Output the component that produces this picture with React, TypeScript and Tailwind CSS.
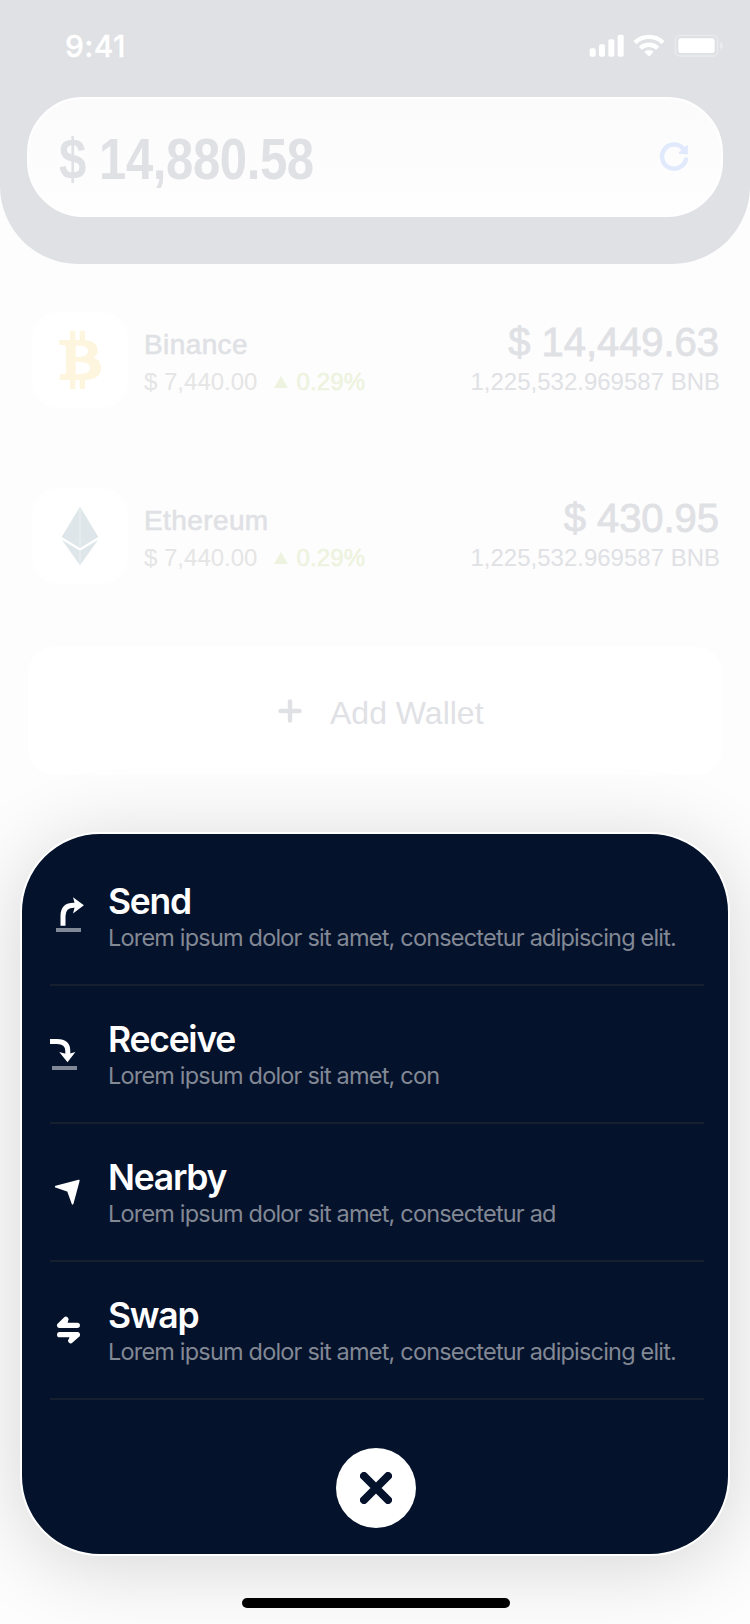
import type { ReactNode } from "react";

const helvetica = "font-['Liberation_Sans',Arial,sans-serif]";

function StatusIcons() {
  return (
    <svg className="h-[25.33px] w-[136.67px]" viewBox="640 100 410 76" fill="#fff">
      <rect x="645" y="146" width="18" height="25" rx="5" />
      <rect x="673" y="134" width="18" height="37" rx="5" />
      <rect x="701" y="119" width="18" height="52" rx="5" />
      <rect x="729" y="105" width="18" height="66" rx="5" />
      <g fill="none" stroke="#fff" strokeWidth="13">
        <path d="M781 129 A60 60 0 0 1 865 129" />
        <path d="M797 146 A37 37 0 0 1 849 146" />
      </g>
      <path d="M809 156 A21 21 0 0 1 837 156 L825 169 Q823 171 821 169 Z" />
      <rect x="902" y="107" width="127" height="62" rx="14" fill="none" stroke="#fff" strokeOpacity=".35" strokeWidth="4" />
      <rect x="911" y="116" width="109" height="44" rx="7" />
      <path d="M1037 127 Q1044 131 1044 138 Q1044 146 1037 149 Z" fillOpacity=".45" />
    </svg>
  );
}

function RefreshIcon() {
  return (
    <svg className="h-8 w-8" viewBox="0 0 32 32" fill="none">
      <path d="M27.9 18.5 A12.1 12.1 0 1 1 25.2 7.5" stroke="#e0eafc" strokeWidth="4.6" strokeLinecap="round" />
      <path d="M29.9 4.8 V12.9 Q29.9 13.7 29.1 13.6 L21.2 12.8 Q20.2 12.3 21 11.3 L28.9 4.3 Q29.9 3.7 29.9 4.8 Z" fill="#e0eafc" />
    </svg>
  );
}

function BitcoinIcon() {
  return (
    <svg className="h-[96px] w-[96px]" viewBox="96 96 288 288" fill="#fef5df">
      <path d="M210 152H226V181H210ZM239 152H255V181H239ZM210 298H226V327H210ZM239 298H255V327H239Z" />
      <path
        fillRule="evenodd"
        d="M178 180 H243 C275 179 293 190 293 211 C293 223 288 230 280 233 C294 237 303 246 303 264 C303 288 285 300 250 300 H178 L181 283 H191 Q198 283 198 276 V203 Q198 195 190 195 H178 Z M227 197 V231 C250 231 264 227 264 213 C264 200 247 196 227 197 Z M227 246 V282 C254 283 270 279 270 264 C270 248 253 245 227 246 Z"
      />
    </svg>
  );
}

function EthereumIcon() {
  return (
    <svg className="h-[96px] w-[96px]" viewBox="96 624 288 288" fill="#dee6e9">
      <path d="M240 680 L295 771 L240 804 L185 771 Z" />
      <path d="M186 780 L240 812 L294 780 L240 856 Z" />
      <path d="M237 685 L240 680 L243 685 V802 L240 804 L237 802 Z M237 810 L240 812 L243 810 V851 L240 856 L237 851 Z" fill="#e6ecee" />
    </svg>
  );
}

function Wallet({ icon, name, total }: { icon: ReactNode; name: string; total: string }) {
  return (
    <div className={`flex h-24 items-start pr-[30px] pl-8 ${helvetica}`}>
      <div className="h-24 w-24 shrink-0 rounded-[26px] bg-white shadow-[0_10px_70px_rgba(0,0,0,0.008)]">{icon}</div>
      <div className="ml-4 flex-1 pt-[13px]">
        <div className="text-[28px] leading-[40px] tracking-[0.4px] text-[#e0e1e5] [-webkit-text-stroke:0.6px_#e0e1e5]">{name}</div>
        <div className="flex items-center text-[24px] leading-[34px] text-[#e5e5e5]">
          <span>$ 7,440.00</span>
          <svg className="ml-[17px] h-[12px] w-[14px]" viewBox="0 0 14 12" fill="#edf3de">
            <path d="M7 0 L14 12 H0 Z" />
          </svg>
          <span className="ml-2 tracking-[0.15px] text-[#edf3de] [-webkit-text-stroke:0.5px_#edf3de]">0.29%</span>
        </div>
      </div>
      <div className="pt-[10px] text-right text-[#e0e1e5]">
        <div className="mr-px text-[40px] leading-[40px] tracking-[-0.05px] [-webkit-text-stroke:0.8px_#e0e1e5]">{total}</div>
        <div className="mt-[3px] text-[24px] leading-[34px]">1,225,532.969587 BNB</div>
      </div>
    </div>
  );
}

const sendIcon = (
  <>
    <rect x="6" y="34" width="25" height="4" fill="#808796" />
    <path d="M13 31.8 V22 Q13 11.2 24 11.2 H27" fill="none" stroke="#fff" strokeWidth="5" />
    <path d="M23 3.2 L33.9 11.2 L23 19.4 L25.2 11.2 Z" />
  </>
);

const receiveIcon = (
  <>
    <rect x="2" y="34" width="25" height="4" fill="#808796" />
    <path d="M0 9.5 H7 Q17.8 9.5 17.8 19 V24" fill="none" stroke="#fff" strokeWidth="5" />
    <path d="M9.2 20 L17.5 22.2 L25.4 20 L17.5 30.2 Z" />
  </>
);

const nearbyIcon = (
  <path d="M28.8 10.5 L5.8 16.7 L18 21 L22.6 33.6 Z" stroke="#fff" strokeWidth="1.8" strokeLinejoin="round" />
);

const swapIcon = (
  <>
    <path d="M9.7 17.3 H27.3 M9.7 17.3 L15.8 11.4 M27.3 26.7 H9.7 M27.3 26.7 L20.8 32.6" fill="none" stroke="#fff" strokeWidth="5.3" strokeLinecap="round" />
    <path d="M10 17 L16 11 L18.2 12.5 Q17.5 14 17.5 17 Z M27 27 L21 33 L18.8 31.5 Q19.5 30 19.5 27 Z" />
  </>
);

function Action({ icon, title, text }: { icon: ReactNode; title: string; text: string }) {
  return (
    <div className="flex h-[138px] border-b-2 border-[#161f2f]">
      <svg className="mt-[46px] h-12 w-[58px] shrink-0" viewBox="0 0 58 48" fill="#fff">
        {icon}
      </svg>
      <div className="pt-[34px] whitespace-nowrap">
        <div className="text-[35.5px] leading-[40px] font-semibold tracking-[-1.25px] text-white">{title}</div>
        <div className="text-[23.5px] leading-[32px] tracking-[-0.81px] text-[#828894]">{text}</div>
      </div>
    </div>
  );
}

export default function App() {
  return (
    <div className="flex h-[1624px] w-[750px] flex-col overflow-hidden bg-[#fdfdfd] font-['Inter',sans-serif]">
      <header className="h-[264px] shrink-0 rounded-b-[78px] bg-[#e0e1e5]">
        <div className="flex h-[97px] items-start justify-between pt-[33px] pr-[25px] pl-[65px]">
          <span className="text-[30px] leading-[27px] font-medium tracking-[0.4px] text-white [-webkit-text-stroke:0.3px_#fff]">9:41</span>
          <StatusIcons />
        </div>
        <div className="mx-[27px] flex h-[120px] items-center justify-between rounded-[56px] border-2 border-white bg-linear-to-b from-[#fbfbfc] to-[#fefefe] pr-[31px] pl-[30px]">
          <span className={`origin-left scale-x-[0.86] pt-1 text-[57px] leading-none font-bold tracking-[-0.45px] whitespace-nowrap text-[#e0e1e5] ${helvetica}`}>
            $ 14,880.58
          </span>
          <RefreshIcon />
        </div>
      </header>

      <main className="mt-12 flex shrink-0 flex-col">
        <Wallet icon={<BitcoinIcon />} name="Binance" total="$ 14,449.63" />
        <div className="h-20" />
        <Wallet icon={<EthereumIcon />} name="Ethereum" total="$ 430.95" />
        <button className={`mx-7 mt-[63px] flex h-32 items-center rounded-[26px] bg-white pl-[250px] text-[32px] text-[#e0e1e5] ${helvetica}`}>
          <svg className="h-6 w-6" viewBox="0 0 24 24" fill="none" stroke="#e0e1e5" strokeWidth="4.4" strokeLinecap="round">
            <path d="M12 2.5 V21.5 M2.5 12 H21.5" />
          </svg>
          <span className="ml-7 pt-1">Add Wallet</span>
        </button>
      </main>

      <section className="mx-5 mt-[57px] flex h-[724px] shrink-0 flex-col rounded-[80px] border-2 border-white bg-[#04122c] pt-[14px] pr-6 pl-7 shadow-[0_10px_80px_rgba(0,0,0,0.16)]">
        <Action icon={sendIcon} title="Send" text="Lorem ipsum dolor sit amet, consectetur adipiscing elit." />
        <Action icon={receiveIcon} title="Receive" text="Lorem ipsum dolor sit amet, con" />
        <Action icon={nearbyIcon} title="Nearby" text="Lorem ipsum dolor sit amet, consectetur ad" />
        <Action icon={swapIcon} title="Swap" text="Lorem ipsum dolor sit amet, consectetur adipiscing elit." />
        <button className="mt-12 ml-[286px] flex size-20 items-center justify-center rounded-full bg-white">
          <svg className="size-8" viewBox="0 0 32 32" fill="none" stroke="#04122c" strokeWidth="8" strokeLinecap="round">
            <path d="M4 4 L28 28 M28 4 L4 28" />
          </svg>
        </button>
      </section>

      <div className="mt-[42px] ml-[242px] h-[10px] w-[268px] shrink-0 rounded-full bg-black" />
    </div>
  );
}
